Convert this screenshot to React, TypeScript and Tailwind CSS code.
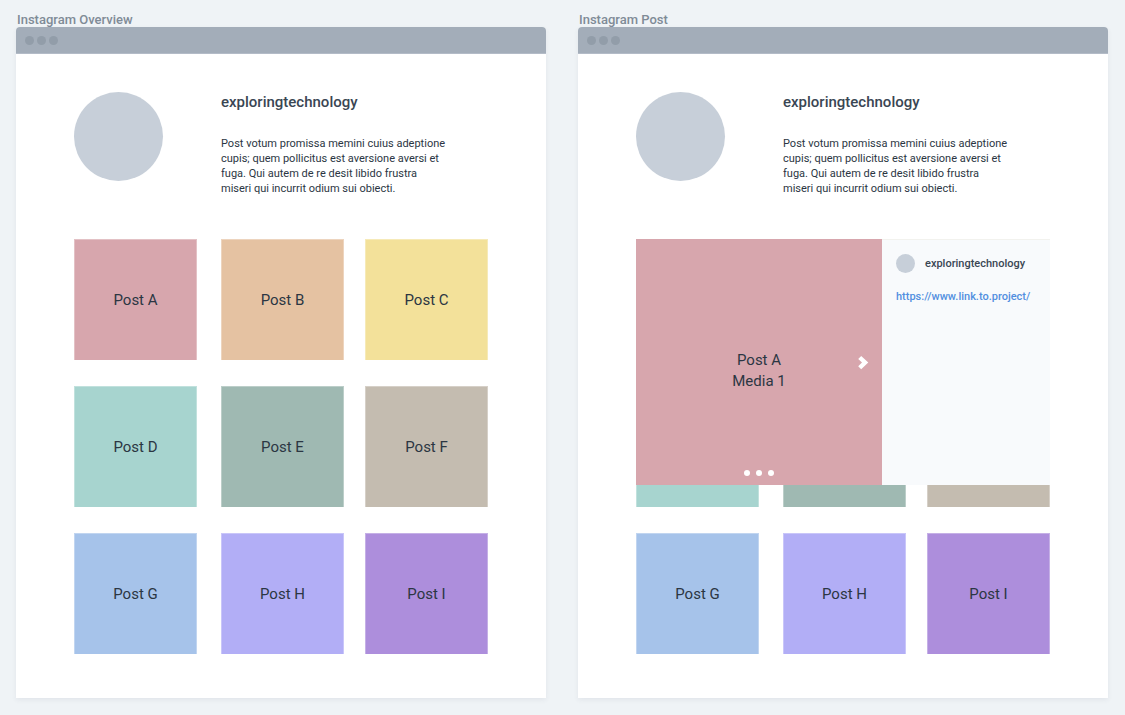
import React from 'react';

type Post = { name: string; color: string };

const posts: Post[] = [
  { name: 'Post A', color: 'bg-[#d7a6ad]' },
  { name: 'Post B', color: 'bg-[#e5c2a2]' },
  { name: 'Post C', color: 'bg-[#f3e19a]' },
  { name: 'Post D', color: 'bg-[#a7d4cf]' },
  { name: 'Post E', color: 'bg-[#9fb9b2]' },
  { name: 'Post F', color: 'bg-[#c4bcb0]' },
  { name: 'Post G', color: 'bg-[#a6c3ea]' },
  { name: 'Post H', color: 'bg-[#b2aef6]' },
  { name: 'Post I', color: 'bg-[#ad8edc]' },
];

function BrowserWindow({ title, children }: { title: string; children: React.ReactNode }) {
  return (
    <section className="flex min-w-0 flex-1 flex-col">
      <h2 className="px-px text-[13px] leading-[15px] font-medium text-[#7f8b97]">{title}</h2>
      <div className="rounded-t bg-white shadow-[0_2px_5px_rgba(50,60,80,0.07)]">
        <div className="flex h-[27px] items-center gap-[3px] rounded-t border-b border-[#b3bbc7] bg-[#a3adb9] px-[9px]">
          <span className="size-[9px] rounded-full bg-[#929da9]" />
          <span className="size-[9px] rounded-full bg-[#929da9]" />
          <span className="size-[9px] rounded-full bg-[#929da9]" />
        </div>
        <div className="px-[58px] pt-[38px] pb-11">{children}</div>
      </div>
    </section>
  );
}

function Profile() {
  return (
    <header className="grid grid-cols-[147fr_267fr]">
      <div className="size-[89px] rounded-full bg-[#c7cfd9]" />
      <div className="pb-[43px]">
        <h1 className="text-[15px] leading-5 font-medium text-[#3a4653]">exploringtechnology</h1>
        <p className="mt-6 text-[11px] leading-[15px] whitespace-nowrap text-[#2b3643]">
          Post votum promissa memini cuius adeptione
          <br />
          cupis; quem pollicitus est aversione aversi et
          <br />
          fuga. Qui autem de re desit libido frustra
          <br />
          miseri qui incurrit odium sui obiecti.
        </p>
      </div>
    </header>
  );
}

function PostGrid({ covered = 0 }: { covered?: number }) {
  return (
    <div className="grid grid-cols-[147fr_144fr_123fr] gap-y-[26px]">
      {posts.map((post, index) =>
        index < covered ? (
          <div
            key={post.name}
            className={`h-[121px] w-[123px] border-x border-t border-white/30 ${post.color}`}
          />
        ) : (
          <button
            key={post.name}
            type="button"
            className={`h-[121px] w-[123px] border-x border-t border-white/30 text-[15px] leading-5 text-[#2b3643] ${post.color}`}
          >
            {post.name}
          </button>
        ),
      )}
    </div>
  );
}

function PostDialog() {
  return (
    <article className="absolute inset-x-0 top-0 flex h-[246px]">
      <div className="relative flex w-[246px] items-center justify-center bg-[#d7a6ad]">
        <p className="pt-[18px] text-center text-[15px] leading-[21px] text-[#2b3643]">
          Post A
          <br />
          Media 1
        </p>
        <button type="button" aria-label="Next media" className="absolute top-[116px] right-3">
          <svg viewBox="0 0 14 16" className="h-4 w-3.5" fill="#fff">
            <path d="M5.2 0.9 L2.2 3.9 L6 7.6 L2.2 11.3 L5.2 14.3 L12.3 7.6 Z" />
          </svg>
        </button>
        <div className="absolute inset-x-0 bottom-[9px] flex justify-center gap-1.5">
          <span className="size-1.5 rounded-full bg-white" />
          <span className="size-1.5 rounded-full bg-white" />
          <span className="size-1.5 rounded-full bg-white" />
        </div>
      </div>
      <div className="flex-1 border-t border-[#f2f2ee] bg-[#f8fafc] px-3.5 pt-3.5 text-[11px] leading-[15px] font-medium">
        <div className="flex items-center gap-2.5 text-[#3a4653]">
          <span className="size-[19px] rounded-full bg-[#c7cfd9]" />
          <span>exploringtechnology</span>
        </div>
        <a href="https://www.link.to.project/" className="mt-4 block text-[#528fe0]">
          https://www.link.to.project/
        </a>
      </div>
    </article>
  );
}

export default function App() {
  return (
    <main className="flex min-h-screen items-start gap-8 bg-[#eff3f6] py-3 pr-[17px] pl-4 font-['Roboto',sans-serif]">
      <BrowserWindow title="Instagram Overview">
        <Profile />
        <PostGrid />
      </BrowserWindow>
      <BrowserWindow title="Instagram Post">
        <Profile />
        <div className="relative">
          <PostGrid covered={6} />
          <PostDialog />
        </div>
      </BrowserWindow>
    </main>
  );
}
